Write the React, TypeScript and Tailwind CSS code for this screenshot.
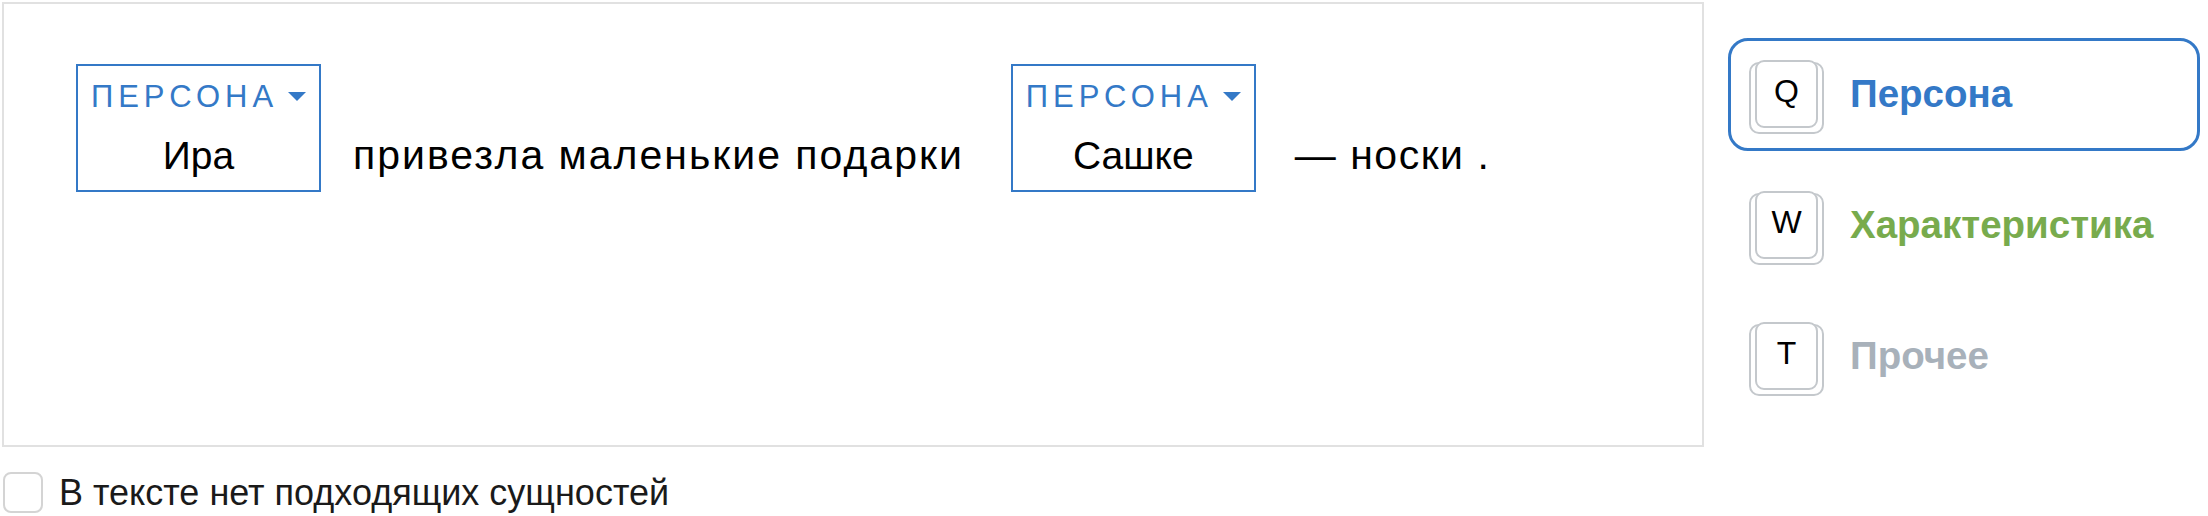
const font = { fontFamily: '"Liberation Sans", Arial, sans-serif' };

type EntityProps = { label: string; value: string; className?: string };
function Entity({ label, value, className }: EntityProps) {
  return (
    <span
      className={`inline-block w-[245px] border-2 border-[#3479c7] text-center align-baseline tracking-normal ${className ?? ""}`}
    >
      <span className="flex items-center justify-center pt-[15px] text-[31px] leading-none text-[#3479c7]">
        <span className="tracking-[5px]">{label}</span>
        <svg width="18" height="9" viewBox="0 0 18 9" className="ml-[10px]">
          <path d="M0 0 L18 0 L9 9 Z" fill="#3479c7" />
        </svg>
      </span>
      <span className="mt-[24px] block pb-[15px] text-[39px] leading-none text-black">{value}</span>
    </span>
  );
}

type KeyProps = { letter: string };
function Key({ letter }: KeyProps) {
  return (
    <div className="relative h-[72px] w-[75px] shrink-0 translate-y-[3px] rounded-[10px] border-2 border-[#c4c8cc] bg-white">
      <div className="absolute -top-[4px] bottom-[4px] left-[4px] right-[4px] flex items-center justify-center rounded-[9px] border-2 border-[#c4c8cc] bg-white pb-[6px] text-[32px] leading-none text-black">
        {letter}
      </div>
    </div>
  );
}

const entityTypes = [
  { key: "Q", name: "Персона", color: "text-[#3479c7]", active: true },
  { key: "W", name: "Характеристика", color: "text-[#78ab4d]", active: false },
  { key: "T", name: "Прочее", color: "text-[#a8b1ba]", active: false },
];

export default function App() {
  return (
    <div className="h-[516px] w-[2208px] overflow-hidden bg-white pl-[2px] pt-[2px]" style={font}>
      <div className="flex">
        <div className="h-[445px] w-[1702px] shrink-0 border-2 border-[#e1e1e1] pl-[72px] pt-[60px]">
          <div className="whitespace-nowrap text-[39px] leading-none text-black">
            <Entity label="ПЕРСОНА" value="Ира" className="mr-[32px]" />
            <span className="text-[41px] tracking-[2px]">привезла маленькие подарки</span>
            <Entity label="ПЕРСОНА" value="Сашке" className="ml-[47px] mr-[39px]" />
            <span className="text-[41px] tracking-[1.5px]">— носки .</span>
          </div>
        </div>
        <div className="ml-[24px] mt-[36px] flex w-[472px] flex-col gap-[18px]">
          {entityTypes.map((t) => (
            <div
              key={t.key}
              className={`flex h-[113px] items-center rounded-[20px] border-[3px] pl-[18px] ${
                t.active ? "border-[#3479c7]" : "border-transparent"
              }`}
            >
              <Key letter={t.key} />
              <span className={`ml-[26px] text-[38.5px] font-bold leading-none ${t.color}`}>{t.name}</span>
            </div>
          ))}
        </div>
      </div>
      <label className="ml-[1px] mt-[25px] flex items-center">
        <span className="h-[41px] w-[40px] shrink-0 rounded-[8px] border-2 border-[#d4d4d4]" />
        <span className="ml-[16px] text-[36px] leading-none text-[#1a1a1a]">В тексте нет подходящих сущностей</span>
      </label>
    </div>
  );
}
